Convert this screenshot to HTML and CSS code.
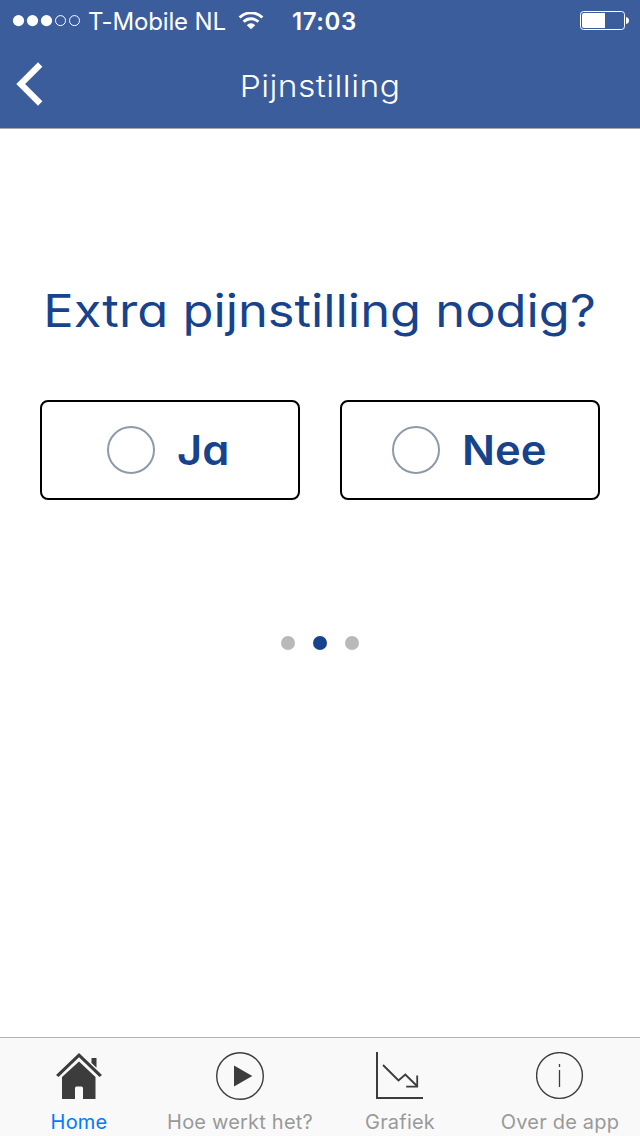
FILE: index.html
```html
<!DOCTYPE html>
<html lang="nl">

<head>
    <meta charset="UTF-8">
    <meta name="viewport" content="width=device-width, initial-scale=1.0">
    <title>Pijnstilling</title>
    <link rel="stylesheet" href="styles.css">
</head>

<body>
    <header>
        <div class="statusbar">
            <svg class="signal" width="68" height="12" viewBox="0 0 68 12">
                <circle cx="6.5" cy="5.6" r="5.6" fill="#fff"/>
                <circle cx="20.5" cy="5.6" r="5.6" fill="#fff"/>
                <circle cx="34.5" cy="5.6" r="5.6" fill="#fff"/>
                <circle cx="48.5" cy="5.6" r="5" fill="none" stroke="#fff"/>
                <circle cx="62.5" cy="5.6" r="5" fill="none" stroke="#fff"/>
            </svg>
            <span class="carrier">T-Mobile NL</span>
            <svg class="wifi" width="26" height="18" viewBox="0 0 26 18">
                <g fill="none" stroke="#fff" stroke-width="2.8">
                    <path d="M1.6 5.5 A16.2 16.2 0 0 1 24.4 5.5"/>
                    <path d="M5.6 9.8 A10.5 10.5 0 0 1 20.4 9.8"/>
                </g>
                <path d="M13 17.3 L8.8 13.2 A5.6 5.6 0 0 1 17.2 13.2 Z" fill="#fff"/>
            </svg>
            <span class="clock">17:03</span>
            <svg class="battery" width="50" height="20" viewBox="0 0 50 20">
                <rect x="0.5" y="0.5" width="44" height="18" rx="3" fill="none" stroke="#fff"/>
                <path d="M4 2 H25 V17 H4 Q2 17 2 15 V4 Q2 2 4 2 Z" fill="#fff"/>
                <path d="M46 6 Q49 6.5 49 9.5 Q49 12.5 46 13 Z" fill="#fff"/>
            </svg>
        </div>
        <nav class="navbar">
            <svg class="back" width="28" height="44" viewBox="0 0 28 44">
                <path d="M24.2 2.5 L4.7 22 L24.2 41.5" fill="none" stroke="#fff" stroke-width="6.2"/>
            </svg>
            <h1>Pijnstilling</h1>
        </nav>
    </header>

    <main>
        <h2>Extra pijnstilling nodig?</h2>
        <div class="answers">
            <div class="answer">
                <span class="radio"></span>
                <span class="text">Ja</span>
            </div>
            <div class="answer">
                <span class="radio"></span>
                <span class="text">Nee</span>
            </div>
        </div>
        <div class="dots">
            <span class="dot"></span>
            <span class="dot active"></span>
            <span class="dot"></span>
        </div>
    </main>

    <footer>
        <div class="tab active">
            <svg width="48" height="48" viewBox="0 0 48 48" fill="#3c3c3c">
                <path d="M24 1 L47 23 L44.5 25 L24 5.2 L3.5 25 L1 23 Z"/>
                <path d="M36.5 6 H41.5 V15.8 L36.5 11 Z"/>
                <path d="M24 9.5 L40.5 25 V47 H28 V36 Q28 34.5 26.5 34.5 H21.5 Q20 34.5 20 36 V47 H7 V25 Z"/>
            </svg>
            <span class="label">Home</span>
        </div>
        <div class="tab">
            <svg width="48" height="48" viewBox="0 0 48 48">
                <circle cx="24" cy="24" r="23.3" fill="none" stroke="#3c3c3c" stroke-width="1.4"/>
                <path d="M18 13.5 L36.3 24 L18 34.5 Z" fill="#3c3c3c"/>
            </svg>
            <span class="label">Hoe werkt het?</span>
        </div>
        <div class="tab">
            <svg width="48" height="48" viewBox="0 0 48 48" fill="none" stroke="#3c3c3c">
                <path d="M1 0 V46 H47" stroke-width="2"/>
                <path d="M7 13 L22.5 28.5 L29.3 22.5 L41 34" stroke-width="1.9"/>
                <path d="M41.2 23.5 V34.6 H30.2" stroke-width="1.8"/>
            </svg>
            <span class="label">Grafiek</span>
        </div>
        <div class="tab">
            <svg width="48" height="48" viewBox="0 0 48 48" fill="none" stroke="#3c3c3c">
                <circle cx="23.5" cy="23.5" r="22.9" stroke-width="1.4"/>
                <path d="M23.5 12 V15 M23.5 18 V35" stroke-width="1.3"/>
            </svg>
            <span class="label">Over de app</span>
        </div>
    </footer>
</body>
</html>
```
FILE: styles.css
```css
* {
    box-sizing: border-box;
}

body {
    margin: 0;
    height: 1136px;
    display: flex;
    flex-direction: column;
    font-family: 'Inter', sans-serif;
    background-color: white;
    overflow: hidden;
}

svg {
    display: block;
    flex-shrink: 0;
}

header {
    height: 129px;
    background-color: #3b5d9c;
    border-bottom: 1px solid #a7a7aa;
    color: white;
}

.statusbar {
    height: 40px;
    display: flex;
    align-items: center;
    padding: 2px 10px 0 12px;
    white-space: nowrap;
}

.carrier {
    width: 137px;
    margin-left: 8px;
    font-size: 24px;
    letter-spacing: -0.15px;
}

.wifi {
    margin-left: 13px;
}

.clock {
    margin-left: 28px;
    font-size: 24px;
    font-weight: 600;
    letter-spacing: 0.6px;
}

.battery {
    margin-left: auto;
}

.navbar {
    height: 88px;
    display: grid;
    grid-template-columns: 60px 1fr 60px;
    align-items: center;
    padding: 0 16px;
}

/* cv11 = single-storey a */
h1, h2, .answer {
    font-feature-settings: 'cv11';
}

h1 {
    margin: 3px 0 0;
    text-align: center;
    font-size: 30px;
    font-weight: 300;
    letter-spacing: 0.4px;
    transform: scaleX(1.12);
}

main {
    flex: 1;
    display: flex;
    flex-direction: column;
    align-items: center;
    color: #17438c;
}

h2 {
    margin: 152px 0 0;
    height: 60px;
    line-height: 60px;
    font-size: 45px;
    font-weight: 380;
    white-space: nowrap;
    transform: scaleX(1.125);
}

.answers {
    width: 560px;
    margin-top: 59px;
    display: grid;
    grid-template-columns: 1fr 1fr;
    gap: 40px;
}

.answer {
    height: 100px;
    display: flex;
    align-items: center;
    justify-content: center;
    gap: 22px;
    border: 2px solid black;
    border-radius: 8px;
    font-size: 41px;
    font-weight: 600;
}

.answer .text {
    margin-right: 6px;
    line-height: 50px;
    transform: scaleX(1.06);
    transform-origin: left;
}

.radio {
    width: 48px;
    height: 48px;
    border: 2px solid #8e99aa;
    border-radius: 50%;
}

.dots {
    margin-top: 136px;
    display: flex;
    gap: 18px;
}

.dot {
    width: 14px;
    height: 14px;
    border-radius: 50%;
    background-color: #b9b9b9;
}

.dot.active {
    background-color: #17438c;
}

footer {
    height: 99px;
    display: grid;
    grid-template-columns: repeat(4, 160px);
    background-color: #f9f9f9;
    border-top: 1px solid #b2b2b2;
}

.tab {
    display: flex;
    flex-direction: column;
    align-items: center;
    padding-top: 14px;
    color: #999;
    font-size: 20px;
    letter-spacing: 0.2px;
    white-space: nowrap;
}

.tab.active {
    padding-right: 2px;
    color: #007aff;
}

.label {
    margin-top: 9px;
    line-height: 26px;
}
```
